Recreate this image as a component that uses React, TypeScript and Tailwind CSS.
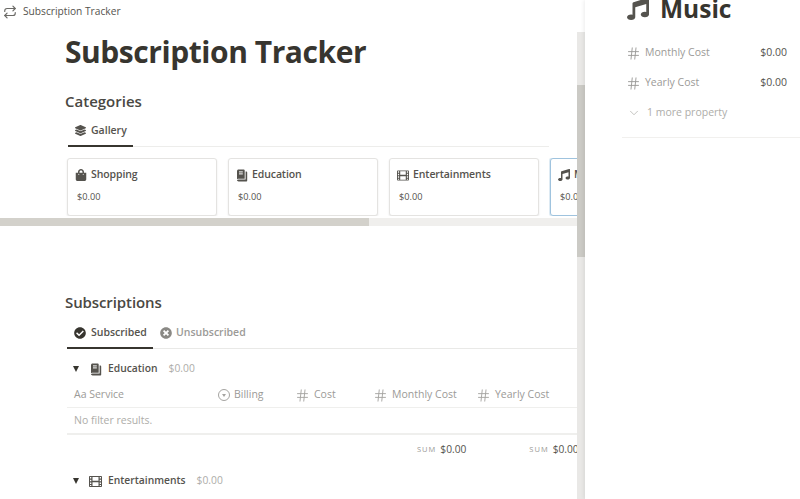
import { FaCheckCircle, FaLayerGroup, FaMusic, FaShoppingBag, FaTimesCircle } from "react-icons/fa";
import { ChevronDown, Hash, Repeat } from "lucide-react";
import type { ReactNode } from "react";

const font = "font-['Open_Sans','Noto_Sans',sans-serif]";

function BookIcon() {
  return (
    <svg viewBox="0 0 12 13" width="12" height="13" fill="currentColor">
      <path d="M1 2.2C1 1.3 1.7.6 2.6.6h5.2c.5 0 .9.4.9.9v8.3H2.6c-.9 0-1.6.4-1.6.9z" />
      <path d="M9.6 2.6h.8c.5 0 .8.4.8.8v8.4c0 .4-.3.7-.7.7H2.6c-.9 0-1.5-.5-1.6-1.2.2-.6.8-.9 1.6-.9h7z" />
      <rect x="3" y="2.4" width="3.8" height="1" fill="#fff" />
      <rect x="3" y="4.4" width="3.8" height="1" fill="#fff" />
    </svg>
  );
}

function FilmIcon() {
  return (
    <svg viewBox="0 0 13 11" width="13" height="11" fill="currentColor">
      <path fillRule="evenodd" d="M.8 0h11.4c.4 0 .8.4.8.8v9.4c0 .4-.4.8-.8.8H.8c-.4 0-.8-.4-.8-.8V.8C0 .4.4 0 .8 0zM1 1v1.6h1.3V1zm0 2.7v1.6h1.3V3.7zm0 2.7V8h1.3V6.4zm0 2.7V10h1.3v-.9zM10.7 1v1.6H12V1zm0 2.7v1.6H12V3.7zm0 2.7V8H12V6.4zm0 2.7V10H12v-.9zM3.5 1v3.8h6V1zm0 5.2V10h6V6.2z" />
    </svg>
  );
}

function Card({ icon, name, selected }: { icon: ReactNode; name: string; selected?: boolean }) {
  return (
    <div className={`w-[150px] h-[58px] shrink-0 rounded-[3px] bg-white px-[9px] pt-[8px] border ${selected ? "border-[#9fc3de] shadow-[0_0_0_1px_rgba(159,195,222,0.35)]" : "border-[#e4e3e1] shadow-[0_1px_2px_rgba(15,15,15,0.1)]"}`}>
      <div className="-ml-[2px] flex items-center gap-[4px] h-[16px] text-[10.5px] tracking-[-0.1px] font-semibold text-[#55534e] whitespace-nowrap">
        <span className="w-[12px] flex justify-center text-[#55534e] text-[12px]">{icon}</span>
        {name}
      </div>
      <div className="mt-[7px] text-[9.2px] leading-[14px] text-[#55534e]">$0.00</div>
    </div>
  );
}

function Col({ w, icon, label }: { w: string; icon?: ReactNode; label: string }) {
  return (
    <div className={`${w} shrink-0 flex items-center gap-[4px] text-[10.5px] text-[#9b9a97] whitespace-nowrap`}>
      {icon}
      {label}
    </div>
  );
}

function Group({ icon, name, className }: { icon: ReactNode; name: string; className?: string }) {
  return (
    <div className={`flex items-center h-[18px] ${className ?? ""}`}>
      <span className="w-0 h-0 ml-[8px] border-x-[3.5px] border-x-transparent border-t-[6px] border-t-[#37352f]" />
      <span className="ml-[10px] w-[13px] flex justify-center text-[13px] text-[#55534e]">{icon}</span>
      <span className="ml-[6px] text-[10.3px] font-semibold text-[#55534e]">{name}</span>
      <span className="ml-[11px] text-[10.3px] text-[#aeada9]">$0.00</span>
    </div>
  );
}

const HashIcon = () => <Hash size={15} strokeWidth={1.5} className="text-[#a5a4a1] -ml-[1px]" />;

export default function App() {
  return (
    <div className={`${font} flex w-[800px] h-[499px] overflow-hidden bg-white text-[#37352f]`}>
      <div className="w-[577px] shrink-0 h-full overflow-hidden flex flex-col">
        <div className="h-[23px] shrink-0 flex items-center pl-[3px] gap-[6px] text-[10.2px] text-[#55534e]">
          <Repeat size={14} strokeWidth={2} className="text-[#6b6a66]" />
          Subscription Tracker
        </div>
        <h1 className="ml-[65px] mt-[9px] text-[30px] tracking-[-0.45px] leading-[40px] font-bold whitespace-nowrap text-[#37352f]">Subscription Tracker</h1>
        <h2 className="ml-[65px] mt-[19px] text-[15px] leading-[20px] font-semibold text-[#4a4843]">Categories</h2>
        <div className="ml-[68px] w-[481px] mt-[2px] h-[34px] border-b border-[#ededeb]">
          <div className="w-[65px] h-[34px] border-b-2 border-[#37352f] flex items-center pl-[7px] pt-[3px] gap-[5px] text-[10.5px] font-semibold text-[#55534e]">
            <FaLayerGroup className="text-[11px]" />
            Gallery
          </div>
        </div>
        <div className="flex gap-[11px] pl-[67px] mt-[11px] overflow-hidden">
          <Card icon={<FaShoppingBag />} name="Shopping" />
          <Card icon={<BookIcon />} name="Education" />
          <Card icon={<FilmIcon />} name="Entertainments" />
          <Card icon={<FaMusic />} name="Music" selected />
        </div>
        <div className="mt-[2px] h-[8px] shrink-0 bg-[#f0efed]">
          <div className="w-[369px] h-full bg-[#d3d1cb]" />
        </div>
        <h2 className="ml-[65px] mt-[66px] text-[15px] tracking-[-0.1px] leading-[20px] font-semibold text-[#4a4843]">Subscriptions</h2>
        <div className="ml-[67px] mt-[8px] h-[29px] border-b border-[#e9e9e7] flex">
          <div className="w-[86px] h-[29px] border-b-2 border-[#37352f] flex items-center pl-[7px] pb-[2px] gap-[5px] text-[10.5px] font-semibold text-[#55534e]">
            <FaCheckCircle className="text-[12px] text-[#37352f]" />
            Subscribed
          </div>
          <div className="flex items-center pl-[7px] pb-[2px] gap-[4px] text-[10.5px] font-semibold text-[#9b9a97]">
            <FaTimesCircle className="text-[12px] text-[#8a8985]" />
            Unsubscribed
          </div>
        </div>
        <Group className="ml-[65px] mt-[11px]" icon={<BookIcon />} name="Education" />
        <div className="ml-[67px] mt-[5px] h-[25px] flex items-center pl-[7px] border-b border-[#efefed]">
          <Col w="w-[144px]" label="Aa Service" />
          <Col w="w-[78px]" icon={<span className="w-[12px] h-[12px] rounded-full border border-[#a5a4a1] flex items-center justify-center"><span className="w-0 h-0 border-x-[2.5px] border-x-transparent border-t-[3px] border-t-[#a5a4a1]" /></span>} label="Billing" />
          <Col w="w-[78px]" icon={<HashIcon />} label="Cost" />
          <Col w="w-[103px]" icon={<HashIcon />} label="Monthly Cost" />
          <Col w="w-[90px]" icon={<HashIcon />} label="Yearly Cost" />
        </div>
        <div className="ml-[67px] h-[27px] flex items-center pl-[7px] pt-[1px] text-[10.5px] text-[#aeada9] border-b-2 border-[#efefed]">No filter results.</div>
        <div className="h-[30px] flex items-center text-[#55534e] text-[10.2px] whitespace-nowrap">
          <span className="ml-[417px] text-[7.5px] tracking-[1px] text-[#9b9a97]">SUM</span>
          <span className="ml-[4px]">$0.00</span>
          <span className="ml-[63px] text-[7.5px] tracking-[1px] text-[#9b9a97]">SUM</span>
          <span className="ml-[4px]">$0.00</span>
        </div>
        <Group className="ml-[65px] mt-[7px]" icon={<FilmIcon />} name="Entertainments" />
      </div>

      <div className="w-[8px] shrink-0 h-full flex flex-col">
        <div className="mt-[32px] flex-1 bg-[#e9e8e6]">
          <div className="mt-[53px] h-[172px] bg-[#cbcac5]" />
        </div>
      </div>

      <div className="flex-1 h-full shadow-[-1px_0_4px_rgba(15,15,15,0.08)] pl-[42px] pr-[13px]">
        <div className="flex items-center h-[20px] mt-[-1px] text-[24.5px] font-bold text-[#37352f] gap-[11px]">
          <FaMusic className="text-[22px] text-[#55534e]" />
          <span className="leading-[24px]">Music</span>
        </div>
        <div className="mt-[19px] pb-[9px] border-b border-[#f1f0ee] ml-[-5px] pl-[5px] mr-[-13px] pr-[13px]">
          <div className="h-[30px] flex items-center justify-between text-[10.5px]">
            <span className="flex items-center gap-[4px] text-[#9b9a97]"><Hash size={15} strokeWidth={1.5} className="-ml-[1px]" />Monthly Cost</span>
            <span className="text-[#55534e]">$0.00</span>
          </div>
          <div className="h-[30px] flex items-center justify-between text-[10.5px]">
            <span className="flex items-center gap-[4px] text-[#9b9a97]"><Hash size={15} strokeWidth={1.5} className="-ml-[1px]" />Yearly Cost</span>
            <span className="text-[#55534e]">$0.00</span>
          </div>
          <div className="h-[30px] flex items-center text-[10.5px] text-[#aeada9] gap-[6px]">
            <ChevronDown size={14} strokeWidth={1.25} />1 more property
          </div>
        </div>
      </div>
    </div>
  );
}
